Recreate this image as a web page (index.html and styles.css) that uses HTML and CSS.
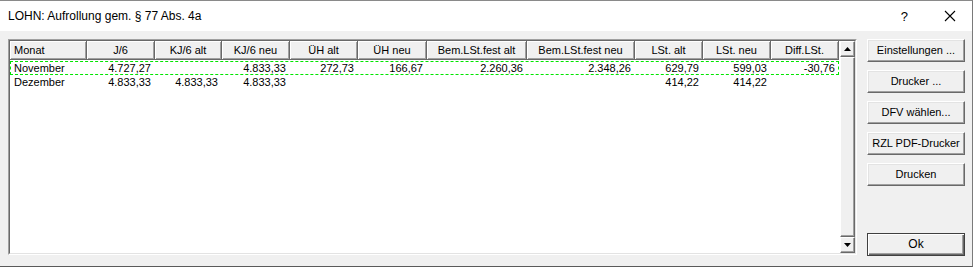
FILE: index.html
```html
<!DOCTYPE html>
<html lang="de">
<head>
<meta charset="utf-8">
<title>LOHN: Aufrollung gem. § 77 Abs. 4a</title>
<link rel="stylesheet" href="styles.css">
</head>
<body>
<div class="window">
  <div class="titlebar">
    <span class="title">LOHN: Aufrollung gem. § 77 Abs. 4a</span>
    <span class="help">?</span>
    <svg class="close" width="12" height="12" viewBox="0 0 12 12"><path d="M1 1 L11 11 M11 1 L1 11" stroke="#000" stroke-width="1.1" fill="none"/></svg>
  </div>
  <div class="content">
    <div class="listbox">
      <div class="listinner">
        <div class="table">
          <div class="row header">
            <div class="c c1">Monat</div>
            <div class="c c2">J/6</div>
            <div class="c c3">KJ/6 alt</div>
            <div class="c c4">KJ/6 neu</div>
            <div class="c c5">ÜH alt</div>
            <div class="c c6">ÜH neu</div>
            <div class="c c7">Bem.LSt.fest alt</div>
            <div class="c c8">Bem.LSt.fest neu</div>
            <div class="c c9">LSt. alt</div>
            <div class="c c10">LSt. neu</div>
            <div class="c c11">Diff.LSt.</div>
          </div>
          <div class="row data focus">
            <div class="c c1">November</div>
            <div class="c c2">4.727,27</div>
            <div class="c c3"></div>
            <div class="c c4">4.833,33</div>
            <div class="c c5">272,73</div>
            <div class="c c6">166,67</div>
            <div class="c c7">2.260,36</div>
            <div class="c c8">2.348,26</div>
            <div class="c c9">629,79</div>
            <div class="c c10">599,03</div>
            <div class="c c11">-30,76</div>
          </div>
          <div class="row data">
            <div class="c c1">Dezember</div>
            <div class="c c2">4.833,33</div>
            <div class="c c3">4.833,33</div>
            <div class="c c4">4.833,33</div>
            <div class="c c5"></div>
            <div class="c c6"></div>
            <div class="c c7"></div>
            <div class="c c8"></div>
            <div class="c c9">414,22</div>
            <div class="c c10">414,22</div>
            <div class="c c11"></div>
          </div>
        </div>
        <div class="scrollbar">
          <div class="sbtn"><svg width="7" height="4" viewBox="0 0 7 4"><path d="M3.5 0 L7 4 L0 4 Z" fill="#000"/></svg></div>
          <div class="thumb"></div>
          <div class="sbtn"><svg width="7" height="4" viewBox="0 0 7 4"><path d="M0 0 L7 0 L3.5 4 Z" fill="#000"/></svg></div>
        </div>
      </div>
    </div>
    <div class="buttons">
      <div class="btn">Einstellungen ...</div>
      <div class="btn">Drucker ...</div>
      <div class="btn">DFV wählen...</div>
      <div class="btn">RZL PDF-Drucker</div>
      <div class="btn">Drucken</div>
      <div class="btn default">Ok</div>
    </div>
  </div>
</div>
</body>
</html>
```

FILE: styles.css
```css
* { box-sizing: border-box; }
html, body { margin: 0; padding: 0; background: #f0f0f0; }
body { width: 973px; height: 267px; overflow: hidden; }

.window {
  width: 973px;
  height: 267px;
  background: #f0f0f0;
  border-top: 1px solid #8a8a8a;
  border-right: 1px solid #7a7a7a;
  border-bottom: 1px solid #5a5a5a;
  display: flex;
  flex-direction: column;
  font-family: "Liberation Sans", Arial, sans-serif;
}

.titlebar {
  height: 30px;
  background: #fff;
  display: flex;
  align-items: center;
  padding-left: 8px;
  font-family: "Liberation Sans", Arial, sans-serif;
  font-size: 12px;
  color: #000;
}
.title { flex: 1; }
.help { font-size: 13px; margin-right: 36px; }
.close { margin-right: 16px; }

.content {
  flex: 1;
  display: flex;
  padding: 8px 7px 10px 8px;
  gap: 10px;
}

.listbox {
  width: 849px;
  height: 216px;
  border: 1px solid;
  border-color: #a0a0a0 #fff #fff #a0a0a0;
}
.listinner {
  height: 100%;
  border: 1px solid;
  border-color: #696969 #e3e3e3 #e3e3e3 #696969;
  background: #fff;
  display: flex;
}

.table { width: 829px; font-size: 11px; color: #000; }
.row { display: flex; }
.header { height: 19px; }
.header .c {
  background: #f0f0f0;
  border-right: 1px solid #696969;
  border-bottom: 1px solid #696969;
  box-shadow: inset 1px 1px #fff, inset -1px -1px #a0a0a0;
  text-align: center;
  line-height: 18px;
}
.header .c1 { text-align: left; padding-left: 4px; }

.data { height: 14px; line-height: 14px; }
.data .c { text-align: right; padding-right: 4px; white-space: nowrap; }
.data .c1 { text-align: left; padding-left: 4px; }
.focus { outline: 1px dashed #00e600; outline-offset: -1px; margin-top: 1px; }

.c1 { width: 77px; }
.c2 { width: 68px; }
.c3 { width: 67px; }
.c4 { width: 68px; }
.c5 { width: 68px; }
.c6 { width: 69px; }
.c7 { width: 100px; }
.c8 { width: 108px; }
.c9 { width: 68px; }
.c10 { width: 68px; }
.c11 { width: 68px; }

.scrollbar {
  width: 16px;
  margin-left: 1px;
  display: flex;
  flex-direction: column;
  background: #f0f0f0;
}
.sbtn, .thumb {
  background: #f0f0f0;
  border: 1px solid;
  border-color: #fff #696969 #696969 #fff;
  box-shadow: inset -1px -1px #a0a0a0;
}
.sbtn {
  height: 16px;
  display: flex;
  align-items: center;
  justify-content: center;
}
.thumb { flex: 1; }

.buttons {
  width: 98px;
  display: flex;
  flex-direction: column;
  gap: 8px;
}
.btn {
  height: 23px;
  background: #f0f0f0;
  border: 1px solid;
  border-color: #fff #696969 #696969 #fff;
  box-shadow: inset -1px -1px #a0a0a0, inset 1px 1px #e3e3e3;
  font-size: 11px;
  text-align: center;
  line-height: 21px;
  color: #000;
}
.btn.default {
  margin-top: auto;
  border: 1px solid #404040;
  box-shadow: inset 1px 1px #fff, inset -1px -1px #696969, inset -2px -2px #a0a0a0;
  font-size: 12px;
}
```
